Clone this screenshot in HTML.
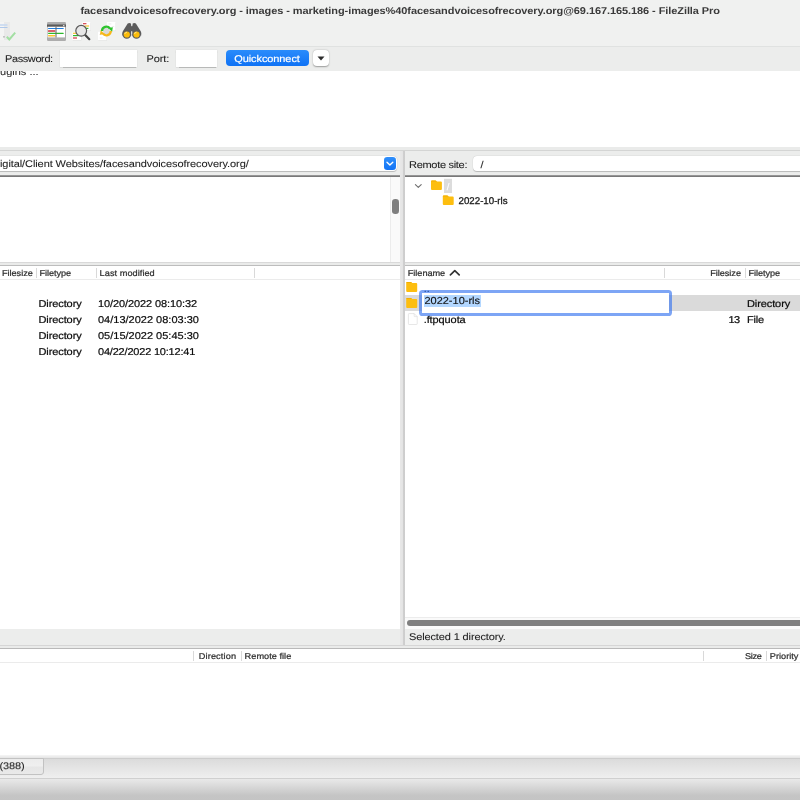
<!DOCTYPE html>
<html><head><meta charset="utf-8"><title>FileZilla Pro</title>
<style>
*{box-sizing:border-box;margin:0;padding:0}
html,body{width:800px;height:800px;overflow:hidden;background:#ecedec;font-family:"Liberation Sans",sans-serif;font-size:11px;color:#1f1f1f;text-rendering:geometricPrecision}
.a{position:absolute;white-space:nowrap}
.t{position:absolute;white-space:nowrap;line-height:14px;height:14px;font-size:11px;color:#1c1c1c;-webkit-text-stroke-width:.22px;transform:translateY(.7px) scaleY(.9);transform-origin:0 10.8px;color:#0a0a0a}
#title{left:80.5px;top:3px;font-weight:bold;font-size:11px;color:#3a3a3a;letter-spacing:-0.083px;-webkit-text-stroke-width:0}
.l{-webkit-text-stroke-width:.08px;color:#222;transform:scaleY(.89)}
.h{position:absolute;white-space:nowrap;line-height:12px;height:12px;font-size:9.2px;color:#303030;-webkit-text-stroke-width:.25px;transform:translateX(-.4px) scaleY(.92);transform-origin:0 9.3px;letter-spacing:-.05px}
.sep{position:absolute;width:1px;height:10px;background:#d9d9d9}
.inp{position:absolute;background:#fff;box-shadow:0 .5px .8px rgba(0,0,0,.2),0 0 0 .5px rgba(0,0,0,.04)}
</style></head><body><div id="root" style="position:absolute;left:0;top:0;width:800px;height:800px;will-change:transform">
<!-- title bar -->
<div class="a" style="left:0;top:0;width:800px;height:46px;background:#f0f1f0"></div>
<div class="t" id="title">facesandvoicesofrecovery.org - images - marketing-images%40facesandvoicesofrecovery.org@69.167.165.186 - FileZilla Pro</div>
<!-- toolbar icons -->
<svg class="a" style="left:0;top:16px" width="150" height="30" viewBox="0 16 150 30">
 <!-- disabled icon -->
 <rect x="-2" y="22" width="6" height="18" fill="#f4f4f4"/><rect x="4" y="22" width="6" height="18" fill="#e9e9e9"/>
 <rect x="0" y="24.2" width="7.5" height="1.6" fill="#c7d9f0"/><rect x="0" y="27" width="7.5" height=".9" fill="#a9c5ea"/>
 <rect x="3" y="36" width="2" height="1.6" fill="#c4c4c4"/>
 <path d="M6.8 36.8L9.3 39.4L15.2 32.6" fill="none" stroke="#a3dfa3" stroke-width="2"/>
 <!-- message log icon -->
 <rect x="47" y="22" width="19" height="19" rx="1.2" fill="#adadad"/>
 <rect x="47" y="24.5" width="19" height="2.3" fill="#5b5b5b"/>
 <rect x="63.2" y="25" width="1.2" height="1.2" fill="#eee"/>
 <rect x="47.6" y="26.8" width="17.4" height="10.6" fill="#fff"/>
 <rect x="48" y="27.9" width="15.8" height="1.2" rx=".6" fill="#1f7fe0"/>
 <rect x="48" y="30.1" width="7.3" height="1.9" rx=".6" fill="#da626c"/>
 <rect x="48" y="32.7" width="15.8" height="1.2" rx=".6" fill="#2db92d"/>
 <rect x="48" y="35.1" width="7.3" height="1.3" rx=".6" fill="#f9c22e"/>
 <rect x="55.5" y="26.8" width="1" height="10.6" fill="#666"/>
 <!-- search icon -->
 <rect x="82.8" y="22.6" width="8" height="8.4" fill="#d9d9d9" opacity=".6"/><rect x="82.4" y="22" width="8" height="8.4" fill="#fff"/>
 <rect x="83" y="23" width="3.4" height="1.3" fill="#d9525c"/><rect x="84.5" y="25.4" width="4.6" height="1.2" fill="#f9c22e"/><rect x="86" y="27.8" width="2.4" height="1.2" fill="#2db92d"/>
 <rect x="72.8" y="32.6" width="8.6" height="8" fill="#d9d9d9" opacity=".6"/><rect x="72.4" y="32" width="8.6" height="8" fill="#fff"/>
 <rect x="73" y="32.7" width="3.4" height="1.2" fill="#f9c22e"/><rect x="73" y="35" width="5.4" height="1.2" fill="#2db92d"/><rect x="73" y="37.3" width="4" height="1.4" fill="#d9525c"/>
 <path d="M85 34.8L89.3 39.2" stroke="#444" stroke-width="2.2" stroke-linecap="round"/>
 <circle cx="81.2" cy="30.8" r="5.4" fill="#e7e7e7" stroke="#5a5a5a" stroke-width="1.2"/>
 <!-- refresh icon -->
 <rect x="107.2" y="22.6" width="8.7" height="8.5" fill="#d9d9d9" opacity=".6"/>
 <rect x="106.8" y="22" width="8.7" height="8.5" fill="#fff"/>
 <rect x="108.4" y="23.6" width="3" height=".7" fill="#e4e4e4"/><rect x="111.8" y="26" width="2.4" height=".7" fill="#e4e4e4"/>
 <rect x="98.4" y="32.4" width="8.5" height="8.4" fill="#d9d9d9" opacity=".6"/>
 <rect x="98" y="31.8" width="8.5" height="8.4" fill="#fff"/>
 <rect x="99.4" y="34.2" width="2.4" height=".7" fill="#e4e4e4"/><rect x="99.6" y="37.6" width="3" height=".7" fill="#e4e4e4"/>
 <circle cx="106.4" cy="31" r="3.4" fill="#d9d9d9"/>
 <path d="M102 31A4.4 4.4 0 0 1 110 28.6" fill="none" stroke="#2ec32e" stroke-width="2.3"/>
 <path d="M108.2 28L112.9 27.2L112.1 31.8z" fill="#2ec32e"/>
 <path d="M110.8 31A4.4 4.4 0 0 1 102.8 33.4" fill="none" stroke="#f6b71a" stroke-width="2.3"/>
 <path d="M104.6 34L99.9 34.8L100.7 30.2z" fill="#f6b71a"/>
 <!-- binoculars -->
 <path d="M127.7 23.6q1.6-1.1 3.2 0l.5 3.4l0 8.5l-9 0q-.6-2.4.6-4.4z" fill="#5c5c5c"/>
 <path d="M135.9 23.6q-1.6-1.1-3.2 0l-.5 3.4l0 8.5l9 0q.6-2.4-.6-4.4z" fill="#5c5c5c"/>
 <rect x="130.6" y="26.2" width="2.4" height="5" fill="#5c5c5c"/>
 <circle cx="126.8" cy="34.4" r="4.3" fill="#5c5c5c"/><circle cx="136.5" cy="34.4" r="4.3" fill="#5c5c5c"/>
 <rect x="131.2" y="31.6" width="1" height="3" fill="#e4e4e4"/>
 <circle cx="126.8" cy="34.5" r="3.1" fill="#fbbc0a"/><circle cx="136.5" cy="34.5" r="3.1" fill="#fbbc0a"/>
 <path d="M124.8 33.8q.6-1.4 2-1.6" stroke="#fff0b0" stroke-width=".9" fill="none"/><path d="M134.5 33.8q.6-1.4 2-1.6" stroke="#fff0b0" stroke-width=".9" fill="none"/>
</svg>
<div class="a" style="left:0;top:46px;width:800px;height:1px;background:#e0e2e1"></div>
<!-- quickconnect bar -->
<div class="a" style="left:0;top:47px;width:800px;height:24px;background:#ecedec"></div>
<div class="t l" style="left:5px;top:52px;letter-spacing:-.4px">Password:</div>
<div class="inp" style="left:59.7px;top:50px;width:77.3px;height:17px"></div>
<div class="t l" style="left:146.5px;top:52px;letter-spacing:-.1px">Port:</div>
<div class="inp" style="left:175.5px;top:50px;width:41.5px;height:17px"></div>
<div class="a" style="left:226px;top:50.4px;width:82.5px;height:15.5px;border-radius:4px;background:linear-gradient(#2a8cfb,#0f72f5)"></div>
<div class="t l" style="left:234.3px;top:51.6px;color:#fff;-webkit-text-stroke-width:.2px;letter-spacing:-.1px">Quickconnect</div>
<div class="a" style="left:313px;top:50px;width:16px;height:16px;border-radius:4px;background:#fff;box-shadow:0 .5px 1.5px rgba(0,0,0,.35)"></div>
<svg class="a" style="left:313px;top:50px" width="16" height="16"><path d="M4.5 6.5h7L8 10.5z" fill="#2c2c2c"/></svg>
<!-- log -->
<div class="a" style="left:0;top:71px;width:800px;height:76px;background:#fff;overflow:hidden"><div class="t l" style="left:-8.5px;top:-6.5px;color:#2a2a2a">plugins ...</div></div>
<!-- horizontal splitter 1 -->
<div class="a" style="left:0;top:147px;width:800px;height:4px;background:#eaebea"></div>
<div class="a" style="left:0;top:150px;width:800px;height:1px;background:#d4d5d4"></div>

<!-- LOCAL site bar -->
<div class="a" style="left:0;top:151px;width:400px;height:24px;background:#ecedec"></div>
<div class="inp" style="left:-6px;top:155.6px;width:403px;height:15.2px;border-radius:4px"></div>
<div class="t l" style="left:0;top:157px;letter-spacing:-.09px">igital/Client Websites/facesandvoicesofrecovery.org/</div>
<div class="a" style="left:383.5px;top:157px;width:12.5px;height:13px;border-radius:3.2px;background:linear-gradient(#2f8ffb,#1173f5)"></div>
<svg class="a" style="left:383px;top:157px" width="14" height="13"><path d="M4 5.3L6.9 8.1L9.8 5.3" fill="none" stroke="#fff" stroke-width="1.4" stroke-linecap="round" stroke-linejoin="round"/></svg>
<div class="a" style="left:0;top:175.3px;width:400px;height:1.8px;background:linear-gradient(#a4a4a4,#6a6a6a)"></div>
<!-- local tree -->
<div class="a" style="left:0;top:177px;width:400px;height:85px;background:#fff"></div>
<div class="a" style="left:389.5px;top:177px;width:10.5px;height:85px;background:#fafafa;border-left:1px solid #ececec"></div>
<div class="a" style="left:392px;top:199px;width:6.5px;height:14.5px;border-radius:3.2px;background:#7f7f7f"></div>
<!-- vertical splitter -->
<div class="a" style="left:400.2px;top:151px;width:4.8px;height:494px;background:linear-gradient(90deg,#e8e8e8 0,#e4e4e4 52%,#cfcfcf 56%,#cdcdcd 100%)"></div>

<!-- REMOTE site bar -->
<div class="a" style="left:405px;top:151px;width:395px;height:24px;background:#ecedec"></div>
<div class="t l" style="left:409px;top:157.6px;letter-spacing:-.3px">Remote site:</div>
<div class="inp" style="left:473px;top:155.8px;width:333px;height:15.2px;border-radius:4px"></div>
<div class="t l" style="left:480.5px;top:157.7px">/</div>
<div class="a" style="left:405px;top:175.3px;width:395px;height:1.8px;background:linear-gradient(#a4a4a4,#6a6a6a)"></div>
<!-- remote tree -->
<div class="a" style="left:405px;top:177px;width:395px;height:85px;background:#fff"></div>
<svg class="a" style="left:405px;top:177px" width="120" height="40" viewBox="405 177 120 40">
 <path d="M415.4 184.6L418.3 187.4L421.2 184.6" fill="none" stroke="#6e6e6e" stroke-width="1.1" stroke-linecap="round" stroke-linejoin="round"/>
 <rect x="444" y="178.8" width="8" height="14.2" fill="#dcdcdc"/>
 <g id="fold"><path d="M431 181.4q0-1 1-1h3.4q.6 0 1 .5l.5.6h4q1 0 1 1v6.6q0 1-1 1h-8.9q-1 0-1-1z" fill="#fdbe0f"/><path d="M431 181.4q0-1 1-1h3.4q.6 0 1 .5l.5.6h-5.9z" fill="#f2ad00"/></g>
 <use href="#fold" x="11.8" y="15"/>
</svg>
<div class="t" style="left:446.7px;top:181.2px;color:#fff;font-size:9.7px;transform:none;-webkit-text-stroke-width:.1px">/</div>
<div class="t" style="left:458.6px;top:195.2px;font-size:9.7px;transform:none;-webkit-text-stroke-width:.3px;color:#1a1a1a">2022-10-rls</div>

<!-- horizontal splitter 2 -->
<div class="a" style="left:0;top:262px;width:800px;height:4px;background:#eaebea"></div>
<div class="a" style="left:0;top:262px;width:800px;height:1px;background:#d9d9d9"></div>
<div class="a" style="left:0;top:265px;width:800px;height:1px;background:#bdbdbd"></div>
<div class="a" style="left:400.2px;top:262px;width:4.8px;height:4px;background:linear-gradient(90deg,#e8e8e8 0,#e4e4e4 52%,#cfcfcf 56%,#cdcdcd 100%)"></div>

<!-- LOCAL list -->
<div class="a" style="left:0;top:266px;width:400px;height:363px;background:#fff"></div>
<div class="a" style="left:0;top:279px;width:400px;height:1px;background:#ebebeb"></div>
<div class="h" style="left:2.4px;top:267px">Filesize</div>
<div class="sep" style="left:36px;top:268px"></div>
<div class="h" style="left:39.8px;top:267px">Filetype</div>
<div class="sep" style="left:95.5px;top:268px"></div>
<div class="h" style="left:100px;top:267px;letter-spacing:.04px">Last modified</div>
<div class="sep" style="left:254px;top:268px"></div>
<div class="t" style="left:38.5px;top:296px;letter-spacing:-.1px">Directory</div><div class="t" style="left:98px;top:296px;letter-spacing:-.1px">10/20/2022 08:10:32</div>
<div class="t" style="left:38.5px;top:312px;letter-spacing:-.1px">Directory</div><div class="t" style="left:98px;top:312px">04/13/2022 08:03:30</div>
<div class="t" style="left:38.5px;top:328px;letter-spacing:-.1px">Directory</div><div class="t" style="left:98px;top:328px">05/15/2022 05:45:30</div>
<div class="t" style="left:38.5px;top:344px;letter-spacing:-.1px">Directory</div><div class="t" style="left:98px;top:344px;letter-spacing:-.2px">04/22/2022 10:12:41</div>
<div class="a" style="left:0;top:629px;width:400px;height:16px;background:#ecedec"></div>

<!-- REMOTE list -->
<div class="a" style="left:405px;top:266px;width:395px;height:351px;background:#fff"></div>
<div class="a" style="left:405px;top:279px;width:395px;height:1px;background:#ebebeb"></div>
<div class="h" style="left:408.2px;top:267px">Filename</div>
<svg class="a" style="left:448px;top:268px" width="14" height="9"><path d="M2.4 6.8L6.8 2.6L11.2 6.8" fill="none" stroke="#333" stroke-width="1.7" stroke-linecap="round" stroke-linejoin="round"/></svg>
<div class="sep" style="left:664px;top:268px"></div>
<div class="h" style="left:710.6px;top:267px">Filesize</div>
<div class="sep" style="left:744.5px;top:268px"></div>
<div class="h" style="left:748.8px;top:267px">Filetype</div>
<div class="a" style="left:405px;top:295.1px;width:395px;height:15.8px;background:#dadada"></div>
<svg class="a" style="left:405px;top:280px" width="20" height="48" viewBox="405 280 20 48">
 <g id="fold2"><path d="M406.2 283q0-1 1-1h3.4q.6 0 1 .5l.5.6h4.1q1 0 1 1v6.8q0 1-1 1h-9q-1 0-1-1z" fill="#fdbe0f"/><path d="M406.2 283q0-1 1-1h3.4q.6 0 1 .5l.5.6h-5.9z" fill="#f2ad00"/></g>
 <use href="#fold2" y="16"/>
 <path d="M408.4 314.2q0-.6.6-.6h5.2l3 3v7.3q0 .6-.6.6h-7.6q-.6 0-.6-.6z" fill="#fff" stroke="#dcdcdc" stroke-width=".7"/>
 <path d="M414.2 313.6v3h3" fill="none" stroke="#dcdcdc" stroke-width=".6"/>
</svg>
<div class="t" style="left:423.7px;top:281px">..</div>
<div class="t" style="left:747px;top:296px;letter-spacing:-.1px">Directory</div>
<div class="t" style="left:423.7px;top:312px;letter-spacing:-.1px">.ftpquota</div>
<div class="t" style="left:728.6px;top:312px;letter-spacing:-.8px">13</div>
<div class="t" style="left:747px;top:312px;letter-spacing:-.2px">File</div>
<!-- rename edit box -->
<div class="a" style="left:419px;top:290.3px;width:253px;height:25.7px;border-radius:3.6px;background:rgba(58,118,240,.66)"></div>
<div class="a" style="left:422.1px;top:292.9px;width:246.7px;height:20.1px;background:#fff"></div>
<div class="a" style="left:423.7px;top:295px;width:57.3px;height:12px;background:#b3d7ff"></div>
<div class="t" style="left:424.4px;top:294.2px;transform:scaleY(.92);-webkit-text-stroke-width:.15px;color:#111">2022-10-rls</div>
<!-- remote h scrollbar -->
<div class="a" style="left:405px;top:617px;width:395px;height:12px;background:#fafafa;border-top:1px solid #ececec"></div>
<div class="a" style="left:407px;top:619.8px;width:400px;height:6.5px;border-radius:3.25px;background:#7f7f7f"></div>
<div class="a" style="left:405px;top:629px;width:395px;height:16px;background:#ecedec"></div>
<div class="t l" style="left:409px;top:630px;letter-spacing:-.13px">Selected 1 directory.</div>

<!-- splitter 3 -->
<div class="a" style="left:0;top:645px;width:800px;height:4px;background:#eaebea"></div>
<div class="a" style="left:0;top:645px;width:800px;height:1px;background:#d6d6d6"></div>
<div class="a" style="left:0;top:647.5px;width:800px;height:1.5px;background:#b9b9b9"></div>
<!-- queue -->
<div class="a" style="left:0;top:649px;width:800px;height:106px;background:#fff"></div>
<div class="a" style="left:0;top:662px;width:800px;height:1px;background:#ebebeb"></div>
<div class="sep" style="left:193px;top:651px"></div>
<div class="h" style="left:199.2px;top:650px;letter-spacing:.12px">Direction</div>
<div class="sep" style="left:241px;top:651px"></div>
<div class="h" style="left:245px;top:650px;letter-spacing:.02px">Remote file</div>
<div class="sep" style="left:703px;top:651px"></div>
<div class="h" style="left:745.5px;top:650px;letter-spacing:-.4px">Size</div>
<div class="sep" style="left:766px;top:651px"></div>
<div class="h" style="left:770.2px;top:650px;letter-spacing:0">Priority</div>
<!-- tabs strip -->
<div class="a" style="left:0;top:755px;width:800px;height:3px;background:linear-gradient(#f6f6f6,#e4e4e4)"></div>
<div class="a" style="left:0;top:758px;width:800px;height:1px;background:#cdcdcd"></div>
<div class="a" style="left:0;top:759px;width:800px;height:19px;background:linear-gradient(#dbdbdb,#efefef)"></div>
<div class="a" style="left:-5px;top:758px;width:49px;height:17px;border:1px solid #c2c2c2;border-radius:0 0 3px 0;background:linear-gradient(#ececec 0,#efefef 48%,#e6e6e6 52%,#e9e9e9 100%)"></div>
<div class="t l" style="left:-.4px;top:758.7px;letter-spacing:-.15px">(388)</div>
<div class="a" style="left:0;top:777.6px;width:800px;height:1.2px;background:#d0d0d0"></div>
<div class="a" style="left:0;top:778.8px;width:800px;height:21.2px;background:linear-gradient(#e9e9e9,#c5c5c5 78%,#c4c4c4)"></div>
</div></body></html>
